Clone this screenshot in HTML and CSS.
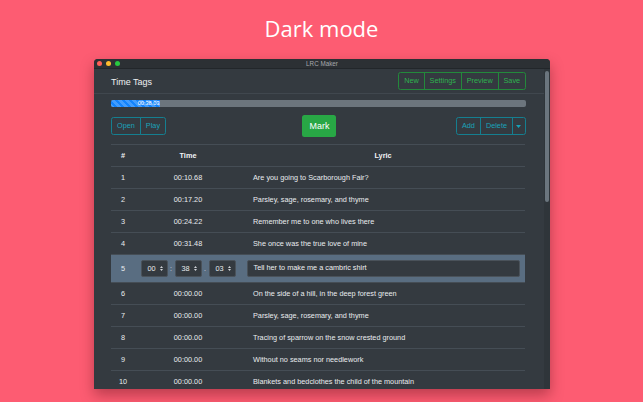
FILE: index.html
```html
<!DOCTYPE html>
<html>
<head>
<meta charset="utf-8">
<link rel="stylesheet" href="styles.css">
</head>
<body>
<div class="page">
  <h1 class="title">Dark mode</h1>
  <div class="window">
    <div class="titlebar">
      <div class="lights"><span class="light red"></span><span class="light yellow"></span><span class="light green"></span></div>
      <div class="wtitle">LRC Maker</div>
    </div>
    <div class="wbody">
      <div class="main">
        <div class="header">
          <div class="htitle">Time Tags</div>
          <div class="btn-group green">
            <button class="btn">New</button><button class="btn">Settings</button><button class="btn">Preview</button><button class="btn">Save</button>
          </div>
        </div>
        <div class="content">
          <div class="progress"><div class="bar" style="width:49px">00:38.03</div></div>
          <div class="toolbar">
            <div class="btn-group teal">
              <button class="btn">Open</button><button class="btn">Play</button>
            </div>
            <button class="mark">Mark</button>
            <div class="btn-group teal">
              <button class="btn">Add</button><button class="btn">Delete</button><button class="btn caret"><svg width="5" height="3" viewBox="0 0 5 3"><path d="M0 0H5L2.5 3Z" fill="#17a2b8"/></svg></button>
            </div>
          </div>
          <table class="tags">
            <thead>
              <tr><th class="c-num">#</th><th class="c-time">Time</th><th class="c-lyric">Lyric</th></tr>
            </thead>
            <tbody>
              <tr><td class="c-num">1</td><td class="c-time">00:10.68</td><td class="c-lyric">Are you going to Scarborough Fair?</td></tr>
              <tr><td class="c-num">2</td><td class="c-time">00:17.20</td><td class="c-lyric">Parsley, sage, rosemary, and thyme</td></tr>
              <tr><td class="c-num">3</td><td class="c-time">00:24.22</td><td class="c-lyric">Remember me to one who lives there</td></tr>
              <tr><td class="c-num">4</td><td class="c-time">00:31.48</td><td class="c-lyric">She once was the true love of mine</td></tr>
              <tr class="active">
                <td class="c-num">5</td>
                <td class="c-time">
                  <div class="timeedit">
                    <div class="sel">00<svg width="3" height="5" viewBox="0 0 3 5"><path d="M0 2H3L1.5 0ZM0 3H3L1.5 5Z" fill="#cfd3d7"/></svg></div>
                    <span class="sep">:</span>
                    <div class="sel">38<svg width="3" height="5" viewBox="0 0 3 5"><path d="M0 2H3L1.5 0ZM0 3H3L1.5 5Z" fill="#cfd3d7"/></svg></div>
                    <span class="sep">.</span>
                    <div class="sel">03<svg width="3" height="5" viewBox="0 0 3 5"><path d="M0 2H3L1.5 0ZM0 3H3L1.5 5Z" fill="#cfd3d7"/></svg></div>
                  </div>
                </td>
                <td class="c-edit"><div class="textinput">Tell her to make me a cambric shirt</div></td>
              </tr>
              <tr><td class="c-num">6</td><td class="c-time">00:00.00</td><td class="c-lyric">On the side of a hill, in the deep forest green</td></tr>
              <tr><td class="c-num">7</td><td class="c-time">00:00.00</td><td class="c-lyric">Parsley, sage, rosemary, and thyme</td></tr>
              <tr><td class="c-num">8</td><td class="c-time">00:00.00</td><td class="c-lyric">Tracing of sparrow on the snow crested ground</td></tr>
              <tr><td class="c-num">9</td><td class="c-time">00:00.00</td><td class="c-lyric">Without no seams nor needlework</td></tr>
              <tr><td class="c-num">10</td><td class="c-time">00:00.00</td><td class="c-lyric">Blankets and bedclothes the child of the mountain</td></tr>
            </tbody>
          </table>
        </div>
      </div>
      <div class="scrollbar"><div class="thumb"></div></div>
    </div>
  </div>
</div>
</body>
</html>
```
FILE: styles.css
```css
* { box-sizing: border-box; }
html, body { margin: 0; padding: 0; }
body {
  background: #fd5c72;
  font-family: "Liberation Sans", Arial, sans-serif;
  width: 643px;
  height: 402px;
  overflow: hidden;
}
.page {
  display: flex;
  flex-direction: column;
  align-items: center;
}
.title {
  margin: 13px 0 0 0;
  font-family: "Open Sans", sans-serif;
  font-weight: 400;
  font-size: 22px;
  line-height: 30px;
  color: #fff;
}
.window {
  margin-top: 16px;
  margin-left: 1px;
  width: 456px;
  height: 330px;
  background: #343a40;
  border-radius: 4px 4px 0 0;
  overflow: hidden;
  box-shadow: 0 6px 14px rgba(60, 0, 10, 0.35);
  display: flex;
  flex-direction: column;
}
.titlebar {
  height: 10px;
  flex: none;
  background: #2c3034;
  border-bottom: 1px solid #22262a;
  display: flex;
  align-items: center;
  position: relative;
}
.lights {
  display: flex;
  gap: 4px;
  padding-left: 3px;
}
.light {
  width: 5px;
  height: 5px;
  border-radius: 50%;
}
.red { background: #fe5f57; }
.yellow { background: #febc2e; }
.light.green { background: #28c840; }
.wtitle {
  position: absolute;
  left: 0;
  right: 0;
  text-align: center;
  font-size: 6.3px;
  color: #a6a9ad;
  line-height: 10px;
}
.wbody {
  flex: 1;
  display: flex;
  min-height: 0;
}
.main {
  flex: 1;
  min-width: 0;
  overflow: hidden;
}
.scrollbar {
  width: 6px;
  flex: none;
  background: #2f353a;
  padding: 2px 1px 0 1px;
}
.thumb {
  height: 131px;
  background: #6b757e;
  border-radius: 2px;
}
.header {
  height: 25px;
  border-bottom: 1px solid #40474e;
  display: flex;
  align-items: center;
  justify-content: space-between;
  padding: 0 18px 0 17px;
}
.htitle {
  font-size: 9px;
  color: #eef0f2;
  padding-top: 1px;
}
.content {
  padding: 0 18px 0 17px;
}
.btn-group {
  display: flex;
}
.btn {
  font-family: "Liberation Sans", Arial, sans-serif;
  font-size: 7.3px;
  line-height: 10.4px;
  padding: 2.5px 4.9px;
  background: transparent;
  border: 1px solid;
  margin: 0 0 0 -1px;
  border-radius: 0;
}
.btn:first-child { margin-left: 0; border-radius: 2.5px 0 0 2.5px; }
.btn:last-child { border-radius: 0 2.5px 2.5px 0; }
.btn-group.green .btn { color: #2fb24f; border-color: #23893b; }
.btn-group.teal .btn { color: #1aa3b9; border-color: #157f90; padding: 3px 5px; }
.btn-group.teal .btn.caret {
  padding: 0 3.5px;
  display: flex;
  align-items: center;
}
.progress {
  margin-top: 6px;
  height: 7px;
  background: #6c757d;
  border-radius: 2px;
  overflow: hidden;
  display: flex;
}
.bar {
  height: 7px;
  background-color: #1383fc;
  background-image: linear-gradient(45deg, rgba(255,255,255,.2) 25%, transparent 25%, transparent 50%, rgba(255,255,255,.2) 50%, rgba(255,255,255,.2) 75%, transparent 75%, transparent);
  background-size: 7px 7px;
  color: #fff;
  font-size: 5.6px;
  line-height: 7px;
  text-align: right;
  padding-right: 0.5px;
}
.toolbar {
  margin-top: 8px;
  height: 22px;
  display: flex;
  align-items: center;
  justify-content: space-between;
}
.mark {
  font-family: "Liberation Sans", Arial, sans-serif;
  height: 22px;
  width: 34px;
  padding: 0;
  margin-left: 17px;
  background: #28a745;
  border: none;
  border-radius: 2.5px;
  color: #fff;
  font-size: 8.9px;
}
.tags {
  margin-top: 7px;
  width: 414px;
  border-collapse: collapse;
  table-layout: fixed;
  color: #e9ecef;
  font-size: 7.3px;
}
.tags th, .tags td {
  border-top: 1px solid #454d55;
  height: 22px;
  padding: 0;
  vertical-align: middle;
  white-space: nowrap;
}
.tags th { font-weight: 700; color: #f2f3f5; }
.c-num { width: 24px; text-align: center; }
.c-time { width: 106px; text-align: center; }
.c-lyric { text-align: left; padding-left: 12px !important; }
th.c-lyric { text-align: center; padding-left: 0 !important; }
.tags tr.active td {
  height: 28px;
  background: #596d81;
}
.timeedit {
  display: flex;
  justify-content: center;
  align-items: center;
  gap: 2.5px;
}
.sel {
  width: 27px;
  height: 16.5px;
  background: #343a40;
  border: 1px solid #4a525a;
  border-radius: 2px;
  display: flex;
  align-items: center;
  justify-content: flex-end;
  gap: 4px;
  padding-right: 4px;
  font-size: 7.3px;
  color: #e9ecef;
}
.sep {
  color: #d9dde1;
  font-size: 7px;
  width: 2px;
  text-align: center;
}
.c-edit { padding: 0 5px 0 6px !important; }
.textinput {
  height: 16.5px;
  background: #343a40;
  border: 1px solid #4a525a;
  border-radius: 2px;
  font-size: 7.3px;
  line-height: 14.5px;
  padding-left: 5.5px;
  color: #eef0f2;
}
```
